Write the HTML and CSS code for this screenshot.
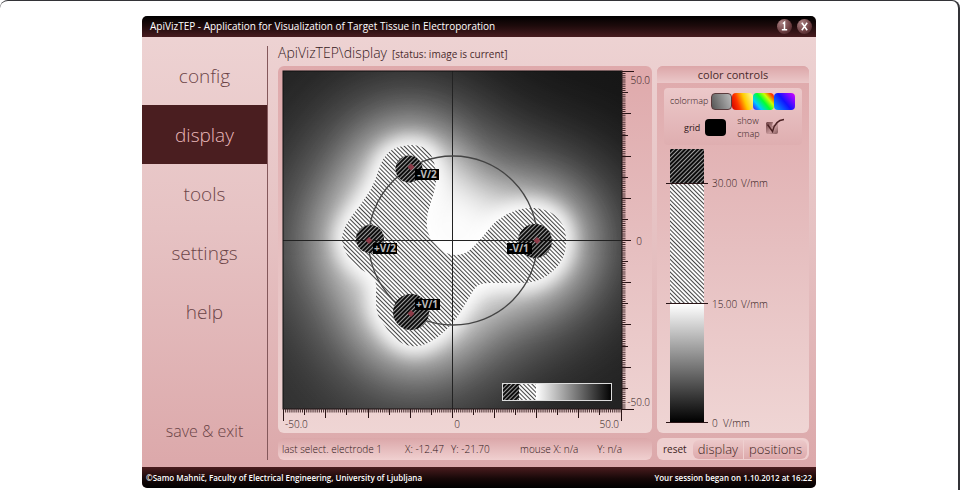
FILE: index.html
```html
<!DOCTYPE html>
<html lang="en">
<head>
<meta charset="utf-8">
<title>ApiVizTEP</title>
<link rel="stylesheet" href="styles.css">
</head>
<body>
<div class="frame">
<div class="app">
  <header class="titlebar">
    <h1 class="title">ApiVizTEP - Application for Visualization of Target Tissue in Electroporation</h1>
    <div class="window-buttons">
      <button class="round" aria-label="Minimize"><svg viewBox="0 0 14 14"><path d="M5.500 4.500L7 3v6.500M4.500 10h5"/></svg></button>
      <button class="round" aria-label="Close"><svg viewBox="0 0 14 14"><path d="M4.500 3.500l5 7M9.500 3.500l-5 7"/></svg></button>
    </div>
  </header>

  <div class="body">
    <nav class="nav">
      <a class="nav-item" href="#config">config</a>
      <a class="nav-item active" href="#display">display</a>
      <a class="nav-item" href="#tools">tools</a>
      <a class="nav-item" href="#settings">settings</a>
      <a class="nav-item" href="#help">help</a>
      <a class="nav-item exit" href="#exit">save &amp; exit</a>
    </nav>

    <main class="main">
      <div class="path"><h2 class="path-name">ApiVizTEP\display</h2><span class="path-status">[status: image is current]</span></div>
      <div class="columns">
        <div class="column">
          <section class="panel">
            <svg class="plot" viewBox="278 66 374 367" role="img" aria-label="Electric field distribution">
              <defs>
                <pattern id="hatch" width="3" height="3" patternUnits="userSpaceOnUse" patternTransform="rotate(45)"><rect width="3" height="3" fill="#fcfcfc"/><rect width="3" height="1" fill="#444"/></pattern>
                <pattern id="dark" width="3" height="3" patternUnits="userSpaceOnUse" patternTransform="rotate(-45)"><rect width="3" height="3" fill="#0c0c0c"/><rect width="3" height="1" fill="#9c9c9c"/></pattern>
                <linearGradient id="map"><stop offset="0" stop-color="#fff"/><stop offset="1" stop-color="#000"/></linearGradient>
                <linearGradient id="base" x1="0" y1="1" x2="1" y2="0"><stop offset="0" stop-color="#303030"/><stop offset="1" stop-color="#161616"/></linearGradient>
                <filter id="far" x="-100%" y="-100%" width="300%" height="300%"><feGaussianBlur stdDeviation="48"/></filter>
                <filter id="mid" x="-100%" y="-100%" width="300%" height="300%"><feGaussianBlur stdDeviation="22"/></filter>
                <filter id="near" x="-50%" y="-50%" width="200%" height="200%"><feGaussianBlur stdDeviation="8"/></filter>
                <clipPath id="area"><rect x="283" y="71" width="339" height="338"/></clipPath>
                <path id="blob" d="M410 145C400 146 393 148 388 153C382 159 381 164 378 172C374 183 371 190 365 198C360 206 356 210 352 216C345 225 342 232 342 240C343 248 347 256 352 262C358 268 364 271 369 274C376 280 377 283 376 292V304C377 316 380 320 385 326C391 336 399 344 411 346C423 348 436 340 449 327C459 317 466 302 475 288C478 284 484 283 490 283H520C533 283 541 280 548 275C559 267 565 258 566 244C566 235 566 228 560 221C554 212 545 209 534 208C519 207 508 213 498 220C488 228 483 238 476 244C470 251 464 255 456 255C446 255 440 250 435 243C428 237 426 228 427 219C428 208 434 196 436 182C437 170 434 160 430 153C425 147 419 145 410 145Z"/>
              </defs>
              <g clip-path="url(#area)">
                <rect x="283" y="71" width="339" height="338" fill="url(#base)"/>
                <use href="#blob" class="glow" filter="url(#far)" stroke-width="76" opacity=".8"/>
                <use href="#blob" class="glow" filter="url(#mid)" stroke-width="34" opacity=".6"/>
                <path class="glow" d="M425 155L530 235L480 275H400Z" filter="url(#mid)" opacity=".95"/>
                <use href="#blob" class="glow" filter="url(#near)" stroke-width="16" opacity=".9"/>
                <use href="#blob" fill="url(#hatch)"/>
                <path class="axis" d="M452.500 71V409M283 240.500H622"/>
                <circle class="ring" cx="453" cy="240.500" r="84.500"/>
                <g fill="url(#dark)"><circle cx="409" cy="169" r="13.500"/><circle cx="370" cy="239" r="14"/><circle cx="411" cy="312" r="18"/><circle cx="535" cy="241" r="17"/></g>
                <path class="axis faint" d="M355 240.500H384M517 240.500H553"/>
                <g class="dots"><path d="M411 163.500l3.500 3.500-3.500 3.500-3.500-3.500zM369 237l3.500 3.500-3.500 3.500-3.500-3.500zM411 310l3.500 3.500-3.500 3.500-3.500-3.500zM537 237l3.500 3.500-3.500 3.500-3.500-3.500z"/></g>
                <g><path d="M415 169h24v11h-24zM373 243h24v11h-24zM415 299h25v11h-25zM507 243h25v11h-25z"/></g>
                <g class="electrode"><text x="427" y="178">-V/2</text><text x="385" y="252">+V/2</text><text x="427" y="308">+V/1</text><text x="519" y="252">-V/1</text></g>
                <rect x="503" y="384" width="16" height="17" fill="url(#dark)"/><rect x="519" y="384" width="17" height="17" fill="url(#hatch)"/><rect x="536" y="384" width="76" height="17" fill="url(#map)"/>
                <rect x="502.500" y="383.500" width="109" height="17" fill="none" stroke="#ddd"/>
              </g>
              <rect class="border" x="283" y="71" width="339" height="338"/>
              <path class="minor" d="M623.500 71V409M283 410.500H622"/>
              <g class="ticks">
                <path d="M622 71.500h12M622 92.500h6M622 113.500h9M622 135.500h6M622 156.500h9M622 177.500h6M622 198.500h9M622 219.500h6M622 240.500h9M622 261.500h6M622 282.500h9M622 303.500h6M622 324.500h9M622 346.500h6M622 367.500h9M622 388.500h6M622 409.500h12"/>
                <path d="M283.500 409v12M304.500 409v6M325.500 409v9M346.500 409v6M368.500 409v9M389.500 409v6M410.500 409v9M431.500 409v6M452.500 409v9M473.500 409v6M494.500 409v9M515.500 409v6M536.500 409v9M557.500 409v6M578.500 409v9M599.500 409v6M621.500 409v12"/>
              </g>
              <g class="scale"><text x="650" y="84" text-anchor="end">50.0</text><text x="639" y="245" text-anchor="middle">0</text><text x="650" y="406" text-anchor="end">-50.0</text><text x="285" y="428">-50.0</text><text x="457" y="428" text-anchor="middle">0</text><text x="619" y="428" text-anchor="end">50.0</text></g>
            </svg>
          </section>
          <div class="status">
            <span class="status-electrode">last select. electrode 1</span><span class="status-x">X: -12.47</span><span class="status-y">Y: -21.70</span><span class="status-mouse">mouse X: n/a</span><span>Y: n/a</span>
          </div>
        </div>

        <div class="column">
          <section class="panel controls">
            <h3 class="controls-title">color controls</h3>
            <div class="options">
              <fieldset class="row maps">
                <legend class="caption">colormap</legend>
                <input class="swatch gray" type="radio" name="map" aria-label="gray" checked><input class="swatch hot" type="radio" name="map" aria-label="hot"><input class="swatch rainbow" type="radio" name="map" aria-label="rainbow"><input class="swatch cool" type="radio" name="map" aria-label="cool">
              </fieldset>
              <div class="row second">
                <label class="caption" for="grid">grid</label>
                <button class="swatch black" id="grid"></button>
                <label class="caption show" for="cmap">show<br>cmap</label>
                <span class="check">
                  <input id="cmap" type="checkbox" checked>
                  <svg viewBox="0 0 20 18"><defs><linearGradient id="box" x2="1" y2="1"><stop offset="0" stop-color="#6d4042"/><stop offset=".6" stop-color="#c99a9c"/><stop offset="1" stop-color="#7e5556"/></linearGradient></defs><path d="M2 4H8L7 8L13 5V14Q13 16 11 16H3Q1 16 1 14V5Z" fill="url(#box)"/><path d="M2.500 6.500L7.500 13.500C9 7 12 2 19 1.500" fill="none" stroke="#4b2224" stroke-width="1.500"/></svg>
                </span>
              </div>
            </div>
            <svg class="legend" viewBox="657 145 152 287" role="img" aria-label="Color scale">
              <defs><linearGradient id="ramp" x2="0" y2="1"><stop offset="0" stop-color="#fff"/><stop offset="1" stop-color="#000"/></linearGradient></defs>
              <rect x="670" y="149" width="34" height="34" fill="url(#dark)"/><rect x="670" y="183" width="34" height="121" fill="url(#hatch)"/><rect x="670" y="304" width="34" height="118" fill="url(#ramp)"/>
              <path class="ticks" d="M666 183.500h42M666 303.500h42M666 422.500h42"/>
              <g class="scale"><text x="712" y="187">30.00</text><text x="741" y="187">V/mm</text><text x="712" y="308">15.00</text><text x="741" y="308">V/mm</text><text x="712" y="427">0</text><text x="723" y="427">V/mm</text></g>
            </svg>
          </section>
          <div class="reset">
            <span class="reset-label">reset</span><button class="reset-button">display</button><button class="reset-button">positions</button>
          </div>
        </div>
      </div>
    </main>
  </div>

  <footer class="footer"><span>©Samo Mahnič, Faculty of Electrical Engineering, University of Ljubljana</span><span>Your session began on 1.10.2012 at 16:22</span></footer>
</div>
</div>
</body>
</html>
```
FILE: styles.css
```css
* { box-sizing: border-box; }
html { background: #fff; overflow: hidden; }
body { margin: 0; font-family: "Open Sans", "Noto Sans", sans-serif; color: #4a2a2c; }
h1, h2, h3 { margin: 0; font-weight: 400; }
button { font: inherit; color: inherit; border: 0; padding: 0; }
svg { display: block; }

.frame {
  margin-right: 1px;
  padding: 15px 0 20px;
  border: solid #333337;
  border-width: 1px 2px 0 0;
  border-radius: 8px 8px 0 0;
}
.app {
  max-width: 674px;
  margin: 0 auto;
  border-radius: 5px;
  overflow: hidden;
  background: linear-gradient(#eed4d4, #e6c2c3 45%, #dba6a8);
}

.titlebar {
  display: flex;
  align-items: center;
  justify-content: space-between;
  height: 21px;
  padding: 0 4px 0 8px;
  background: linear-gradient(#000, #1c0a0b 45%, #481c1f);
}
.title { font-size: 10px; line-height: 21px; font-weight: 400; color: #fff; }
.window-buttons { display: flex; gap: 5px; }
.round {
  width: 15px;
  height: 15px;
  border-radius: 50%;
  background: radial-gradient(circle at 30% 25%, #a98082, #6b3d40 60%, #3c1b1d);
}
.round svg { width: 15px; height: 15px; fill: none; stroke: #fff; stroke-width: 1.4; }

.body { display: flex; padding-bottom: 7px; }

.nav {
  display: flex;
  flex-direction: column;
  flex: 0 0 126px;
  margin-top: 9px;
  border-right: 1px solid #84585b;
}
.nav-item {
  height: 59px;
  font-size: 19px;
  line-height: 61px;
  font-weight: 300;
  text-align: center;
  text-decoration: none;
  color: #6b4447;
}
.nav-item.active { background: #4a1e20; color: #e9b8ba; }
.nav-item.exit { margin-top: auto; font-size: 16px; }

.main { flex: 1; min-width: 0; padding: 6px 7px 0 10px; }
.path { display: flex; align-items: baseline; gap: 5px; height: 23px; line-height: 20px; }
.path-name { font-size: 14px; font-weight: 300; color: #361a1c; }
.path-status { font-size: 10px; }
.columns { display: grid; grid-template-columns: minmax(0, 374fr) minmax(0, 152fr); gap: 5px; }
.column { display: flex; flex-direction: column; gap: 5px; }

.panel {
  border-radius: 6px;
  background: linear-gradient(#dfa9ab, #e6bfc0 50%, #efd5d4);
}
.plot { width: 100%; }
.glow { fill: #fff; stroke: #fff; }
.axis { fill: none; stroke: #222; }
.axis.faint { stroke: #111; }
.ring { fill: none; stroke: #444; stroke-width: 1.3; }
.dots { fill: #8c3a48; }
.electrode { font: 700 10px "Open Sans", sans-serif; fill: #bbb; text-anchor: middle; }
.border { fill: none; stroke: #111; }
.minor { fill: none; stroke: #432a2c; stroke-width: 4; stroke-dasharray: 1 1.11; }
.ticks { fill: none; stroke: #2a1416; }
.scale { font: 300 10px "Open Sans", sans-serif; fill: #2e1517; }

.status {
  display: flex;
  height: 22px;
  padding: 0 30px 0 4px;
  border-radius: 6px;
  background: linear-gradient(#dba7a9, #f0d0d0);
  font-size: 10px;
  line-height: 22px;
  font-weight: 300;
  white-space: nowrap;
  color: #2e1517;
}
.status-electrode { flex: 123; }
.status-x { flex: 46; }
.status-y { flex: 69; }
.status-mouse { flex: 77; }

.controls { flex: 1; display: flex; flex-direction: column; }
.controls-title {
  height: 17px;
  border-radius: 6px 6px 0 0;
  background: linear-gradient(#dca6a8, #ebc8c9);
  font-size: 11px;
  line-height: 17px;
  text-align: center;
}
.options {
  height: 57px;
  margin: 5px 7px 0;
  padding: 5px 6px;
  border-radius: 4px;
  background: linear-gradient(#ecc9ca, #dfaeb0);
}
.row { display: flex; align-items: center; margin: 0; padding: 0; border: 0; }
.caption { float: left; padding: 0; font-size: 9px; line-height: 13px; color: #2e1517; }
.maps { display: block; }
.maps .caption { width: 41px; font-weight: 300; line-height: 16px; }
.swatch {
  appearance: none;
  float: left;
  width: 21px;
  height: 17px;
  margin: 0;
  border-radius: 4px;
}
.gray { border: 1px solid #5a3a3c; background: linear-gradient(70deg, #555, #bbb); }
.hot { background: linear-gradient(70deg, #c00, #f30 30%, #fc0 60%, #ffa); }
.rainbow { background: linear-gradient(50deg, #40f, #0cf 25%, #0f3 50%, #cf0 70%, #f30 90%); }
.cool { background: linear-gradient(50deg, #0af, #11f 50%, #d0f); }
.second { clear: both; gap: 5px; padding: 4px 0 0 14px; }
.black { background: #000; }
.show { margin-left: 6px; font-weight: 300; }
.check { position: relative; width: 20px; height: 18px; }
.check input { position: absolute; inset: 0; width: 20px; height: 18px; margin: 0; appearance: none; }
.legend { width: 100%; }

.reset {
  display: flex;
  align-items: center;
  height: 22px;
  padding: 1px 2px 1px 6px;
  border-radius: 6px;
  background: #efcfcf;
  color: #3c1e20;
}
.reset-label { flex: 1; font-size: 10px; }
.reset-button {
  height: 19px;
  padding: 0 5px;
  background: linear-gradient(#ecc9ca, #dda9ab);
  font-size: 13px;
  line-height: 17px;
  font-weight: 300;
}
.reset-button:nth-child(2) { border-radius: 6px 0 0 6px; margin-right: 1px; }
.reset-button:last-child { border-radius: 0 6px 6px 0; }

.footer {
  display: flex;
  justify-content: space-between;
  height: 21px;
  padding: 0 4px;
  background: linear-gradient(#4a1c1e, #170808 55%, #000);
  font-size: 8px;
  line-height: 22px;
  font-weight: 600;
  color: #fff;
}
```
